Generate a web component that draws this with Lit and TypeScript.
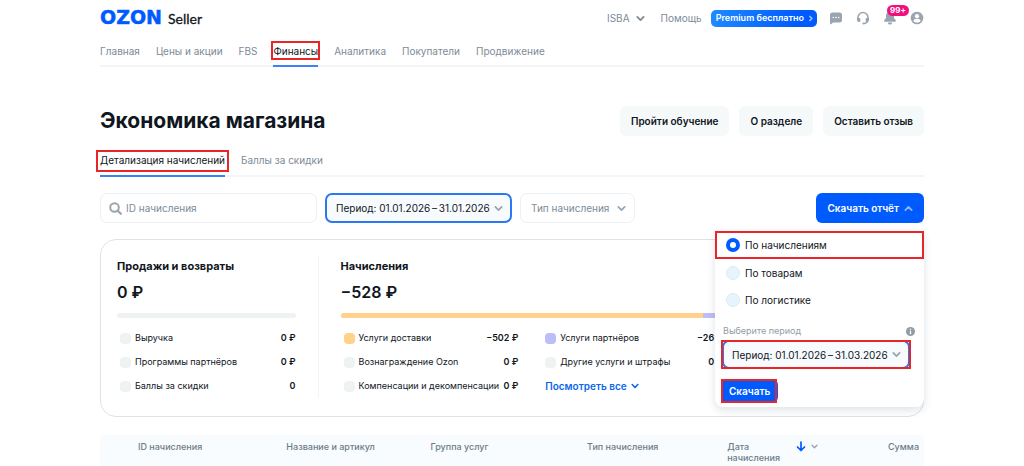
import { LitElement, html, css, svg, nothing } from "lit";
import { customElement, state } from "lit/decorators.js";
import { classMap } from "lit/directives/class-map.js";
import { styleMap } from "lit/directives/style-map.js";

interface Metric {
  label: string;
  value: string;
  tone?: "amber" | "violet";
}

const NAV = ["Главная", "Цены и акции", "FBS", "Финансы", "Аналитика", "Покупатели", "Продвижение"];
const TABS = ["Детализация начислений", "Баллы за скидки"];
const ACTIONS = ["Пройти обучение", "О разделе", "Оставить отзыв"];
const REPORTS = ["По начислениям", "По товарам", "По логистике"];

const SALES: Metric[] = [
  { label: "Выручка", value: "0 ₽" },
  { label: "Программы партнёров", value: "0 ₽" },
  { label: "Баллы за скидки", value: "0" },
];
const CHARGES: Metric[] = [
  { label: "Услуги доставки", value: "−502 ₽", tone: "amber" },
  { label: "Вознаграждение Ozon", value: "0 ₽" },
  { label: "Компенсации и декомпенсации", value: "0 ₽" },
];
const PARTNERS: Metric[] = [
  { label: "Услуги партнёров", value: "−26 ₽", tone: "violet" },
  { label: "Другие услуги и штрафы", value: "0 ₽" },
];

// Dates are joined by a dash set between thin spaces.
const period = (from: string, to: string) => `Период: ${from}\u2009–\u2009${to}`;

const chevron = (up = false) => svg`
  <svg class="chevron" viewBox="0 0 10 10" aria-hidden="true">
    <path d=${up ? "M1.5 6.8 5 3.2 8.5 6.8" : "M1.5 3.2 5 6.8 8.5 3.2"} fill="none"
      stroke="currentColor" stroke-width="2" stroke-linecap="round" stroke-linejoin="round"/>
  </svg>`;

@customElement("app-root")
export class AppRoot extends LitElement {
  static styles = css`
    :host {
      display: block;
      min-height: 100vh;
      box-sizing: border-box;
      padding: 0 100px;
      background: #fff;
      color: #10161d;
      font: 400 10px/14px Inter, "Noto Sans", sans-serif;
    }
    * { box-sizing: border-box; }
    button, input, select { font: inherit; color: inherit; margin: 0; }
    button { border: 0; cursor: pointer; }
    a { color: inherit; text-decoration: none; }
    .chevron { width: 9px; height: 9px; flex: none; display: block; }

    .top { display: flex; align-items: center; justify-content: space-between; height: 36px; }
    .logo { display: flex; align-items: baseline; gap: 6px; }
    .ozon { font: 700 19px/20px "DejaVu Sans", sans-serif; color: #005bff; -webkit-text-stroke: 0.5px; }
    .seller { font: 400 14px/20px Lato, sans-serif; color: #10161d; -webkit-text-stroke: 0.3px; }
    .tools { display: flex; align-items: center; color: #7d8b98; }
    .account { display: flex; align-items: center; gap: 6px; padding: 0; background: none; margin-right: 16px; }
    .help { margin-right: 9px; }
    .premium {
      display: flex; align-items: center; gap: 3px; height: 17px; padding: 0 3px 0 5px;
      margin-right: 12px; border-radius: 5px; color: #fff; font-weight: 600; font-size: 9px;
      background: linear-gradient(100deg, #1f8bff, #005bff 80%);
    }
    .premium .chevron { width: 7px; height: 7px; }
    .icons { display: flex; gap: 13px; }
    .icon { position: relative; padding: 0; width: 14px; height: 14px; background: none; color: #9aa5b0; }
    .icon svg { display: block; width: 14px; height: 14px; }
    .badge {
      position: absolute; left: 4px; top: -6px; height: 11px; padding: 0 3px; border-radius: 6px;
      background: #f1117e; color: #fff; font-weight: 700; font-size: 8px; line-height: 11px;
    }

    .nav, .tabs { display: flex; gap: 16px; border-bottom: 2px solid #f2f4f6; color: #7d8b98; }
    .nav { height: 31px; }
    .nav a, .tabs a { position: relative; margin-bottom: -2px; border-bottom: 2px solid transparent; white-space: nowrap; }
    .nav a { padding-top: 8px; }
    .nav .on, .tabs .on { color: #10161d; border-color: #3b82f6; }
    .marked { position: relative; }
    .marked::after { content: ""; position: absolute; border: 2px solid #e8262a; pointer-events: none; }
    .nav .marked::after { inset: 5px -2px 5px -2px; }
    .tabs .marked::after { inset: 2px -4px 3px -4px; }

    .heading { display: flex; align-items: center; justify-content: space-between; padding-top: 39px; }
    h1 { margin: 0; font-weight: 700; font-size: 21px; line-height: 28px; }
    .actions { display: flex; gap: 10px; }
    .soft { height: 30px; padding: 0 11px; border-radius: 6px; background: #f6f9fa; font-weight: 600; }
    .tabs { margin-top: 12px; height: 29px; }
    .tabs a { padding-top: 5px; }

    .filters { display: flex; align-items: center; gap: 8px; margin-top: 16px; }
    .search {
      display: flex; align-items: center; gap: 4px; width: 217px; height: 30px; padding: 0 8px;
      border: 1px solid #edf0f2; border-radius: 7px; color: #9aa5b0;
    }
    .search svg { width: 13px; height: 13px; flex: none; }
    .search input { flex: 1; min-width: 0; border: 0; outline: 0; padding: 0; background: none; }
    .search input::placeholder { color: #7d8b98; opacity: 1; }
    .pick { position: relative; display: flex; align-items: center; color: #9aa5b0; }
    .pick select {
      appearance: none; height: 30px; padding: 0 24px 0 10px; border: 1px solid #edf0f2;
      border-radius: 7px; background: #fff; color: #7d8b98; outline: 0;
    }
    .pick .chevron { position: absolute; right: 9px; pointer-events: none; }
    .pick .filled { padding: 0 20px 0 9px; border: 2px solid #2b78f5; background: #f7fbfe; color: #10161d; }
    .download { position: relative; margin-left: auto; }
    .primary {
      display: flex; align-items: center; gap: 5px; height: 30px; padding: 0 11px;
      border-radius: 6px; background: #005bff; color: #fff; font-weight: 600;
    }
    .primary .chevron { color: #8db8ff; }

    .menu {
      position: absolute; z-index: 2; top: 38px; right: 0; width: 209px; padding-bottom: 4px;
      border-radius: 8px; background: #fff; box-shadow: 0 3px 8px rgb(20 40 70 / 14%);
    }
    .options { margin: 0; padding: 0; border: 0; }
    .option { display: flex; align-items: center; gap: 5px; height: 27px; padding-left: 11px; }
    .option.marked { height: 28px; }
    .option.marked::after { inset: 0; }
    .option input {
      appearance: none; width: 14px; height: 14px; border-radius: 50%;
      background: #e6f4fc; border: 1px solid #dcecf5;
    }
    .option input:checked { border: 4px solid #005bff; background: #fff; }
    .range-title {
      display: flex; align-items: center; justify-content: space-between;
      padding: 11px 9px 0 8px; color: #929ca6; font-size: 9px;
    }
    .range-title svg { width: 9px; height: 9px; }
    .range { margin: 2px 14px 0 7px; }
    .range .filled { width: 100%; height: 29px; padding: 0 18px 0 8px; }
    .range::after { inset: 0 -1px; }
    .submit { display: inline-flex; margin: 10px 0 0 6px; }
    .submit .primary { height: 24px; padding: 0 8px; }
    .submit::after { inset: 0 1px 0 0; }

    .card {
      display: grid; grid-template-columns: minmax(0, 179fr) 1px minmax(0, 568fr); gap: 22px;
      margin-top: 16px; padding: 16px 16px 18px;
      border: 1px solid #dfe3e6; border-radius: 16px;
    }
    .split { background: #f2f4f6; }
    h2 { margin: 2px 0 0; font-weight: 700; font-size: 11px; line-height: 16px; }
    .total { margin: 8px 0 0; font-weight: 600; font-size: 16px; line-height: 20px; }
    .bar { display: flex; height: 5px; margin-top: 11px; border-radius: 3px; overflow: hidden; background: #eff2f3; }
    .part { background: #ffd18a; }
    .part.rest { flex: 1; background: #bdbdf7; }
    .lists { display: grid; gap: 27px; grid-template-columns: 1fr 1fr 157px; }
    .list { margin: 8px 0 0; padding: 0; list-style: none; font-size: 9px; }
    .list li { display: flex; align-items: center; height: 24px; padding-left: 3px; white-space: nowrap; }
    .list + .list li { padding-left: 0; }
    .dot { width: 11px; height: 11px; margin-right: 4px; border-radius: 4px; background: #eff2f3; }
    .amber { background: #ffd18a; }
    .violet { background: #bdbdf7; }
    .list b { margin-left: auto; font-weight: 600; }
    .more {
      display: flex; align-items: center; gap: 4px; padding: 0; background: none;
      color: #0b66ee; font-weight: 600; font-size: 10px;
    }
    .more .chevron { width: 8px; height: 8px; }

    .ledger { width: 100%; margin-top: 18px; border-collapse: collapse; table-layout: fixed; background: #f8fcfe; }
    .ledger th {
      padding: 6px 5px 4px 10px; font-weight: 500; font-size: 9px; line-height: 11px;
      text-align: left; vertical-align: top; color: #6d7b88;
    }
    .ledger .sum { text-align: right; }
    .gap { width: 28px; }
    .id { width: 18%; }
    .item { width: 17.5%; }
    .group { width: 19%; }
    .kind { width: 17%; }
    .sorting { display: flex; gap: 16px; }
    .arrows { display: flex; gap: 5px; align-items: center; height: 11px; padding: 0; background: none; color: #9aa5b0; }
    .arrows .down { width: 10px; height: 11px; color: #005bff; }
    .arrows .chevron { width: 7px; height: 7px; }
  `;

  @state() private tab = 0;
  @state() private report = 0;

  private metrics(items: Metric[], extra: unknown = nothing) {
    return html`<ul class="list">
      ${items.map(
        (m) => html`<li>
          <span class=${classMap({ dot: true, amber: m.tone === "amber", violet: m.tone === "violet" })}></span>
          <span>${m.label}</span><b>${m.value}</b>
        </li>`
      )}
      ${extra}
    </ul>`;
  }

  private header() {
    return html`<header>
      <div class="top">
        <a class="logo" href="#"><span class="ozon">OZON</span><span class="seller">Seller</span></a>
        <div class="tools">
          <button class="account">ISBA ${chevron()}</button>
          <a class="help" href="#">Помощь</a>
          <button class="premium">Premium бесплатно
            <svg class="chevron" viewBox="0 0 10 10"><path d="M3.5 1.5 7 5 3.5 8.5" fill="none" stroke="#9cc6ff" stroke-width="2"/></svg>
          </button>
          <div class="icons">
            <button class="icon" aria-label="Сообщения">
              <svg viewBox="0 0 14 14"><path fill="currentColor" d="M3.5 1.5h7A2.5 2.5 0 0 1 13 4v5a2.5 2.5 0 0 1-2.5 2.5H4.2L1.8 13.2Q1 13.5 1 12.7V4a2.5 2.5 0 0 1 2.5-2.5Z"/><g fill="#fff"><circle cx="4.3" cy="6.5" r=".8"/><circle cx="7" cy="6.5" r=".8"/><circle cx="9.7" cy="6.5" r=".8"/></g></svg>
            </button>
            <button class="icon" aria-label="Поддержка">
              <svg viewBox="0 0 14 14"><path fill="none" stroke="currentColor" stroke-width="1.5" d="M2 8V6.5a5 5 0 0 1 10 0V8c0 2.5-1.5 4.3-4 4.5"/><path fill="currentColor" d="M1 7h2.5a.8.8 0 0 1 .8.8v2.4a.8.8 0 0 1-.8.8H3a2 2 0 0 1-2-2ZM13 7h-2.5a.8.8 0 0 0-.8.8v2.4c0 .4.4.8.8.8h.5a2 2 0 0 0 2-2Z"/><circle cx="7.5" cy="12.5" r="1.1" fill="currentColor"/></svg>
            </button>
            <button class="icon" aria-label="Уведомления">
              <svg viewBox="0 0 14 14"><path fill="currentColor" d="M7 1a4 4 0 0 1 4 4v2l1.6 2c.7 1 .2 1.8-.8 1.8H2.2c-1 0-1.5-.8-.8-1.8L3 7V5a4 4 0 0 1 4-4ZM4.8 11.4h4.4a2.2 2.2 0 0 1-4.4 0Z"/></svg>
              <span class="badge">99+</span>
            </button>
            <button class="icon" aria-label="Профиль">
              <svg viewBox="0 0 14 14"><circle cx="7" cy="7" r="6.3" fill="currentColor"/><circle cx="7" cy="5.2" r="2.1" fill="#fff"/><path fill="#fff" d="M3.3 10c.5-1.6 2-2.2 3.7-2.2s3.2.6 3.7 2.2c-1 1.1-2.3 1.5-3.7 1.5S4.3 11.1 3.3 10Z"/></svg>
            </button>
          </div>
        </div>
      </div>
      <nav class="nav">
        ${NAV.map((n) => html`<a href="#" class=${classMap({ on: n === "Финансы", marked: n === "Финансы" })}>${n}</a>`)}
      </nav>
    </header>`;
  }

  private downloadMenu() {
    return html`<div class="menu">
      <fieldset class="options" aria-label="Тип отчёта">
        ${REPORTS.map(
          (r, i) => html`<label class=${classMap({ option: true, marked: i === 0 })}>
            <input type="radio" name="report" .checked=${this.report === i} @change=${() => (this.report = i)} />${r}
          </label>`
        )}
      </fieldset>
      <div class="range-title">
        <label for="range">Выберите период</label>
        <svg viewBox="0 0 10 10"><circle cx="5" cy="5" r="5" fill="#929ca6"/><path d="M5 4.3V8M5 2v1.3" stroke="#fff" stroke-width="1.4"/></svg>
      </div>
      <div class="pick range marked">
        <select id="range" class="filled"><option>${period("01.01.2026", "31.03.2026")}</option></select>${chevron()}
      </div>
      <div class="submit marked"><button class="primary">Скачать</button></div>
    </div>`;
  }

  render() {
    return html`
      ${this.header()}
      <main>
        <div class="heading">
          <h1>Экономика магазина</h1>
          <div class="actions">${ACTIONS.map((a) => html`<button class="soft">${a}</button>`)}</div>
        </div>
        <nav class="tabs">
          ${TABS.map(
            (t, i) => html`<a href="#" class=${classMap({ on: this.tab === i, marked: i === 0 })} @click=${() => (this.tab = i)}>${t}</a>`
          )}
        </nav>
        <div class="filters">
          <label class="search">
            <svg viewBox="0 0 13 13"><circle cx="5.5" cy="5.5" r="4.3" fill="none" stroke="currentColor" stroke-width="2"/><path d="m8.8 8.8 3 3" stroke="currentColor" stroke-width="2.2" stroke-linecap="round"/></svg>
            <input type="text" placeholder="ID начисления" aria-label="ID начисления" />
          </label>
          <div class="pick"><select class="filled" aria-label="Период"><option>${period("01.01.2026", "31.01.2026")}</option></select>${chevron()}</div>
          <div class="pick"><select aria-label="Тип начисления"><option>Тип начисления</option></select>${chevron()}</div>
          <div class="download">
            <button class="primary" aria-expanded="true">Скачать отчёт ${chevron(true)}</button>
            ${this.downloadMenu()}
          </div>
        </div>
        <section class="card">
          <div>
            <h2>Продажи и возвраты</h2>
            <p class="total">0 ₽</p>
            <div class="bar"></div>
            ${this.metrics(SALES)}
          </div>
          <div class="split"></div>
          <div>
            <h2>Начисления</h2>
            <p class="total">−528 ₽</p>
            <div class="bar"><span class="part" style=${styleMap({ width: "64%" })}></span><span class="part rest"></span></div>
            <div class="lists">
              ${this.metrics(CHARGES)}
              ${this.metrics(PARTNERS, html`<li><button class="more">Посмотреть все ${chevron()}</button></li>`)}
            </div>
          </div>
        </section>
        <table class="ledger">
          <thead>
            <tr>
              <td class="gap"></td>
              <th class="id">ID начисления</th>
              <th class="item">Название и артикул</th>
              <th class="group">Группа услуг</th>
              <th class="kind">Тип начисления</th>
              <th>
                <div class="sorting">
                  <span>Дата<br />начисления</span>
                  <button class="arrows" aria-label="Сортировать по дате">
                    <svg class="down" viewBox="0 0 10 11"><path d="M5 1v8.5M1.5 6 5 9.5 8.5 6" fill="none" stroke="currentColor" stroke-width="1.7" stroke-linecap="round" stroke-linejoin="round"/></svg>
                    ${chevron()}
                  </button>
                </div>
              </th>
              <th class="sum">Сумма</th>
            </tr>
          </thead>
        </table>
      </main>
    `;
  }
}
